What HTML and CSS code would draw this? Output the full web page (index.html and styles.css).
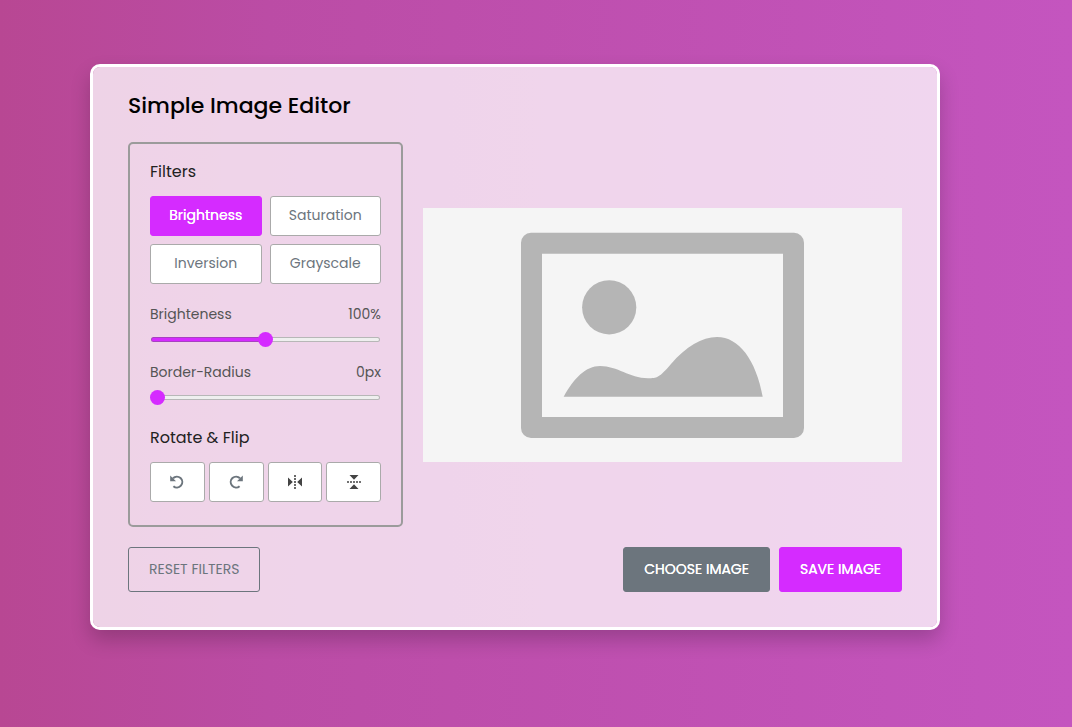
FILE: index.html
```html
<!DOCTYPE html>
<html lang="en">
<head>
<meta charset="utf-8">
<meta name="viewport" content="width=device-width, initial-scale=1">
<title>Simple Image Editor</title>
<link rel="stylesheet" href="styles.css">
</head>
<body>
<main class="container">
  <h1 class="title">Simple Image Editor</h1>
  <div class="wrapper">
    <section class="panel">
      <h2 class="panel-title">Filters</h2>
      <div class="filters">
        <button type="button" class="option active">Brightness</button>
        <button type="button" class="option">Saturation</button>
        <button type="button" class="option">Inversion</button>
        <button type="button" class="option">Grayscale</button>
      </div>
      <div class="slider">
        <div class="slider-info"><label for="brightness">Brighteness</label><output for="brightness">100%</output></div>
        <input id="brightness" type="range" min="0" max="200" value="100" style="--fill: 50%">
      </div>
      <div class="slider">
        <div class="slider-info"><label for="radius">Border-Radius</label><output for="radius">0px</output></div>
        <input id="radius" type="range" min="0" max="100" value="0" style="--fill: 0%">
      </div>
      <h2 class="panel-title rotate-title">Rotate &amp; Flip</h2>
      <div class="rotate">
        <button type="button" class="option" aria-label="Rotate left">
          <svg class="icon" viewBox="0 0 16 16"><path d="M4 4.300A5.400 5.400 0 1 1 4.400 12.200" fill="none" stroke="#6c757d" stroke-width="2"/><path d="M1.200 1.600v5.600h5.800z" fill="#6c757d"/></svg>
        </button>
        <button type="button" class="option" aria-label="Rotate right">
          <svg class="icon" viewBox="0 0 16 16"><path d="M12 4.300A5.400 5.400 0 1 0 11.600 12.200" fill="none" stroke="#6c757d" stroke-width="2"/><path d="M14.800 1.600v5.600H9z" fill="#6c757d"/></svg>
        </button>
        <button type="button" class="option" aria-label="Flip horizontally">
          <svg class="icon" viewBox="0 0 16 16" fill="#444"><path d="M1 3.500v9L5.800 8zM15 3.500v9L10.200 8z"/><path d="M7.200 1h1.600v2H7.200zM7.200 4h1.600v2H7.200zM7.200 7h1.600v2H7.200zM7.200 10h1.600v2H7.200zM7.200 13h1.600v2H7.200z"/></svg>
        </button>
        <button type="button" class="option" aria-label="Flip vertically">
          <svg class="icon" viewBox="0 0 16 16" fill="#444"><path d="M3.500 1h9L8 5.800zM3.500 15h9L8 10.200z"/><path d="M1 7.200h2v1.600H1zM4 7.200h2v1.600H4zM7 7.200h2v1.600H7zM10 7.200h2v1.600h-2zM13 7.200h2v1.600h-2z"/></svg>
        </button>
      </div>
    </section>
    <div class="preview">
      <svg class="placeholder" viewBox="0 0 479 254" role="img" aria-label="Image placeholder">
        <path fill="#f5f5f5" d="M0 0h479v254H0z"/>
        <path fill="#b5b5b5" fill-rule="evenodd" d="M108 24.700H371a10 10 0 0 1 10 10V220a10 10 0 0 1-10 10H108a10 10 0 0 1-10-10V34.700a10 10 0 0 1 10-10zM119 45.700V209H360V45.700z"/>
        <circle cx="186.200" cy="99.300" r="27.100" fill="#b5b5b5"/>
        <path fill="#b5b5b5" d="M140.700 188.700C151 170 163 158 177 158C195 158 206 170.200 225 170.200C234 170.200 236 170 248 156C263 138.500 279 129 294 129C316 129 333 152 339.700 188.700z"/>
      </svg>
    </div>
  </div>
  <div class="controls">
    <button type="button" class="btn reset">RESET FILTERS</button>
    <div class="row">
      <button type="button" class="btn choose">CHOOSE IMAGE</button>
      <button type="button" class="btn save">SAVE IMAGE</button>
    </div>
  </div>
</main>
</body>
</html>
```
FILE: styles.css
```css
* {
  box-sizing: border-box;
  margin: 0;
  padding: 0;
  font-family: Poppins, Inter, "Open Sans", sans-serif;
}
body {
  min-height: 100vh;
  padding: 64px 132px 64px 90px;
  background: linear-gradient(90deg, #b84793, #bb4ca5 25%, #c455bf);
}
.container {
  padding: 23px 35px 35px;
  border: 3px solid #fff;
  border-radius: 10px;
  background: rgba(255, 255, 255, 0.76);
  background-clip: padding-box;
  box-shadow: 0 10px 20px rgba(0, 0, 0, 0.2);
}
.title {
  font-size: 22px;
  line-height: 32px;
  font-weight: 500;
  color: #000;
}
.wrapper {
  display: flex;
  align-items: center;
  gap: 20px;
  margin-top: 20px;
}
.panel {
  flex: 0 0 275px;
  padding: 16px 20px 23px;
  border: 2px solid #9b9b9b;
  border-radius: 5px;
}
.panel-title {
  font-size: 16px;
  line-height: 24px;
  font-weight: 400;
  color: #222;
}
.filters {
  display: grid;
  grid-template-columns: 1fr 1fr;
  gap: 8px;
  margin: 12px 0 20px;
}
.option {
  height: 40px;
  padding-bottom: 2px;
  border: 1px solid #aaa;
  border-radius: 3px;
  background: #fff;
  color: #6c757d;
  font-size: 14px;
}
.option.active {
  border-color: #d52bff;
  background: #d52bff;
  color: #fff;
  text-shadow: 0 0 0 #fff;
}
.slider {
  height: 58px;
}
.slider-info {
  display: flex;
  justify-content: space-between;
  font-size: 14px;
  line-height: 20px;
  color: #555;
}
.slider input {
  position: relative;
  display: block;
  width: 100%;
  height: 15px;
  margin-top: 8px;
  appearance: none;
  background: none;
}
.slider input::before {
  content: "";
  position: absolute;
  inset: 5px 1px;
  border: 1px solid rgba(100, 100, 100, 0.4);
  border-radius: 3px;
  background: linear-gradient(90deg, #d52bff var(--fill), #efefef var(--fill)) border-box;
}
.slider input::-webkit-slider-runnable-track {
  height: 15px;
  background: none;
}
.slider input::-webkit-slider-thumb {
  position: relative;
  appearance: none;
  width: 15px;
  height: 15px;
  border-radius: 50%;
  background: #d52bff;
}
.rotate-title {
  margin-top: 6px;
}
.rotate {
  display: grid;
  grid-template-columns: repeat(4, 1fr);
  gap: 4px;
  margin-top: 12px;
}
.rotate .option {
  display: flex;
  align-items: center;
  justify-content: center;
  padding: 0;
}
.icon {
  width: 16px;
  height: 16px;
}
.preview {
  flex: 1;
}
.placeholder {
  display: block;
  width: 100%;
}
.controls {
  display: flex;
  justify-content: space-between;
  margin-top: 20px;
}
.row {
  display: flex;
  gap: 9px;
}
.btn {
  height: 45px;
  padding: 0 20px;
  border: 1px solid #6c757d;
  border-radius: 3px;
  font-size: 14px;
  color: #fff;
  text-shadow: 0 0 0 #fff;
}
.reset {
  background: none;
  color: #6c757d;
  text-shadow: none;
}
.choose {
  background: #6c757d;
}
.save {
  border-color: #d52bff;
  background: #d52bff;
}
```
